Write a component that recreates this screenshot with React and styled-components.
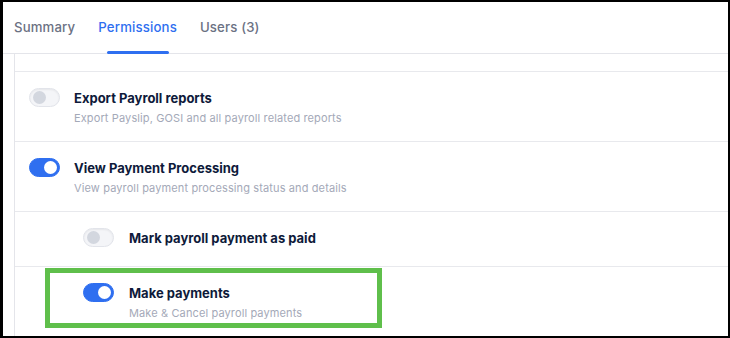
import React, { useState } from 'react';
import styled, { createGlobalStyle } from 'styled-components';

const GlobalStyle = createGlobalStyle`
  * { box-sizing: border-box; }
  body {
    margin: 0;
    background: #fff;
    font-family: Inter, "Noto Sans", "Liberation Sans", sans-serif;
  }
`;

const Frame = styled.div`
  width: 730px;
  height: 338px;
  border-style: solid;
  border-color: #000;
  border-width: 2px 2px 2px 3px;
  background: #fff;
  overflow: hidden;
  display: flex;
  flex-direction: column;
`;

const TabBar = styled.div`
  display: flex;
  gap: 23px;
  height: 52px;
  padding-left: 11px;
  border-bottom: 1px solid #e4e5ea;
  flex-shrink: 0;
`;

const Tab = styled.div`
  position: relative;
  padding-top: 15px;
  font-size: 13.2px;
  line-height: 20px;
  font-weight: 500;
  letter-spacing: 0.15px;
  color: ${(p) => (p.$active ? '#2f6ff0' : '#6b7183')};

  &::after {
    content: '';
    display: ${(p) => (p.$active ? 'block' : 'none')};
    position: absolute;
    left: 9px;
    right: 8px;
    bottom: -1px;
    height: 3px;
    border-radius: 2px;
    background: #2f6ff0;
  }
`;

const List = styled.div`
  margin-left: 11px;
  border-left: 1px solid #e4e5ea;
  flex: 1;
`;

const Spacer = styled.div`
  height: 18px;
  border-bottom: 1px solid #e8e9ed;
`;

const Row = styled.div`
  position: relative;
  display: flex;
  align-items: flex-start;
  gap: ${(p) => (p.$level > 1 ? 15 : 14)}px;
  padding: 17px 14px ${(p) => (p.$hasDesc ? 15 : 18)}px ${(p) => 14 + (p.$level - 1) * 54}px;
  border-bottom: 1px solid #e8e9ed;
`;

const Track = styled.button`
  position: relative;
  flex-shrink: 0;
  width: 31px;
  height: 19px;
  margin-top: -1px;
  padding: 0;
  border-radius: 10px;
  cursor: pointer;
  border: 1px solid ${(p) => (p.$on ? '#2f6ff0' : '#e2e4ea')};
  background: ${(p) => (p.$on ? '#2f6ff0' : '#f4f5f8')};
  box-shadow: ${(p) => (p.$on ? 'none' : 'inset 0 1px 2px rgba(0,0,0,0.06)')};

  &::after {
    content: '';
    position: absolute;
    top: 2px;
    left: ${(p) => (p.$on ? '14px' : '3px')};
    width: 13px;
    height: 13px;
    border-radius: 50%;
    background: ${(p) => (p.$on ? '#fff' : '#d3d7df')};
  }
`;

const Text = styled.div`
  display: flex;
  flex-direction: column;
  gap: 2px;
`;

const Title = styled.div`
  font-size: 13px;
  line-height: 19px;
  font-weight: 700;
  color: #0e1a3a;
`;

const Desc = styled.div`
  font-size: 11px;
  line-height: 16px;
  letter-spacing: 0.12px;
  color: #a4a9b8;
`;

const Highlight = styled.div`
  position: absolute;
  left: 30px;
  top: 1px;
  width: 337px;
  height: 60px;
  border: 5px solid #5fbf4b;
  pointer-events: none;
`;

const permissions = [
  { id: 'export', title: 'Export Payroll reports', desc: 'Export Payslip, GOSI and all payroll related reports', level: 1, on: false },
  { id: 'view', title: 'View Payment Processing', desc: 'View payroll payment processing status and details', level: 1, on: true },
  { id: 'mark', title: 'Mark payroll payment as paid', level: 2, on: false },
  { id: 'make', title: 'Make payments', desc: 'Make & Cancel payroll payments', level: 2, on: true, highlight: true },
];

export default function App() {
  const [state, setState] = useState(
    Object.fromEntries(permissions.map((p) => [p.id, p.on]))
  );

  function toggle(id) {
    setState((s) => ({ ...s, [id]: !s[id] }));
  }

  return (
    <>
      <GlobalStyle />
      <Frame>
        <TabBar>
          <Tab>Summary</Tab>
          <Tab $active>Permissions</Tab>
          <Tab>Users (3)</Tab>
        </TabBar>
        <List>
          <Spacer />
          {permissions.map((item) => (
            <Row key={item.id} $level={item.level} $hasDesc={!!item.desc}>
              <Track $on={state[item.id]} onClick={() => toggle(item.id)} aria-label={item.title} />
              <Text>
                <Title>{item.title}</Title>
                {item.desc && <Desc>{item.desc}</Desc>}
              </Text>
              {item.highlight && <Highlight />}
            </Row>
          ))}
        </List>
      </Frame>
    </>
  );
}
